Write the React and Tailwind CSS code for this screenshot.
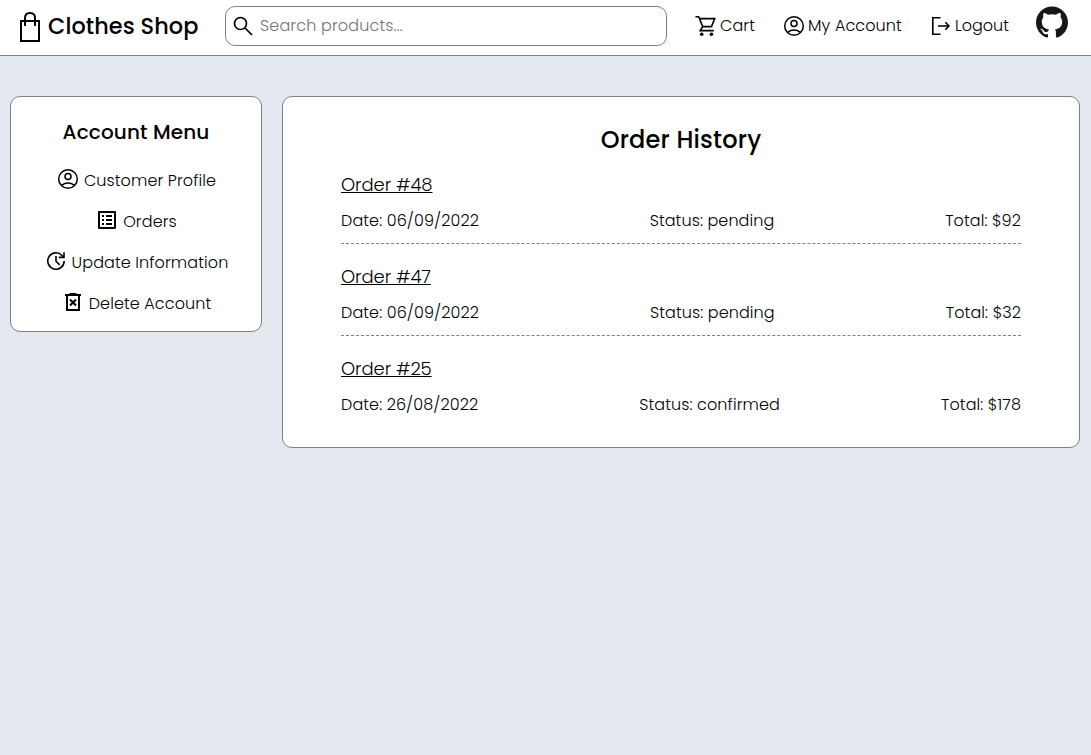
import React from "react";
import { MdOutlineListAlt } from "react-icons/md";
import { SiGithub } from "react-icons/si";

function Bag() {
  return (
    <svg className="mr-[6px] h-[32px] w-6" viewBox="0 0 24 32" fill="none" stroke="black" strokeWidth="2">
      <path d="M3 10h18v20H3zM7 15V7q0-5 5-5t5 5v8" />
    </svg>
  );
}

function Cart() {
  return (
    <svg className="mr-[4px] h-[22px] w-[21px]" viewBox="0 0 21 22" fill="none" stroke="black" strokeWidth="1.6">
      <path d="M0.5 1.8h3.2l4 9.8h8.8l3.2-8H4.5M7.7 11.6l-2.5 4h13.6" />
      <circle cx="6.7" cy="19.3" r="1.8" fill="black" stroke="none" />
      <circle cx="16.4" cy="19.3" r="1.8" fill="black" stroke="none" />
    </svg>
  );
}

function Profile({ className }) {
  return (
    <svg className={"size-[22px] " + className} viewBox="0 0 22 22" fill="none" stroke="black" strokeWidth="1.5">
      <circle cx="11" cy="11" r="9.3" />
      <circle cx="11" cy="8.5" r="3" />
      <path d="M4.5 17.3q6.5-4.6 13 0" />
    </svg>
  );
}

function Logout() {
  return (
    <svg className="mr-[3px] h-[20px] w-[20px]" viewBox="0 0 20 20" fill="none" stroke="black" strokeWidth="1.6">
      <path d="M9.5 1.8H1.8v16.4h7.7M7 10h11M14.3 6.2 18 10l-3.7 3.8" />
    </svg>
  );
}

function Update() {
  return (
    <svg className="mb-[3px] size-5" viewBox="0 0 20 20" fill="none" stroke="black" strokeWidth="1.6">
      <path d="M18.2 10A8.2 8.2 0 1 1 15.8 4.2L17.5 6" />
      <path d="M18 1.2v5.2h-5.2M10 5v5.2l3.7 3.7" />
    </svg>
  );
}

function Orders() {
  return <MdOutlineListAlt className="mb-[3px] size-6" />;
}

function Trash() {
  return (
    <svg className="mb-[3px] h-[20px] w-[18px]" viewBox="0 0 18 20" fill="none" stroke="black" strokeWidth="2">
      <path d="M1 3h16M5.5 2h7M3 3v15h12V3M6 7.5l6 6M12 7.5l-6 6" />
    </svg>
  );
}

const menu = [
  { label: "Customer Profile", icon: <Profile className="mb-[3px]" />, gap: "gap-[5px] pl-px" },
  { label: "Orders", icon: <Orders />, gap: "gap-1" },
  { label: "Update Information", icon: <Update />, gap: "gap-[6px] pl-[2px]" },
  { label: "Delete Account", icon: <Trash />, gap: "gap-[7px] pl-[3px]" },
];

const orders = [
  { id: "Order #48", date: "06/09/2022", status: "pending", total: "$92" },
  { id: "Order #47", date: "06/09/2022", status: "pending", total: "$32" },
  { id: "Order #25", date: "26/08/2022", status: "confirmed", total: "$178" },
];

export default function App() {
  return (
    <div className="min-h-screen bg-[#e4e8f1] font-['Poppins','Inter',sans-serif] font-light tracking-[0.1px] text-black">
      <header className="flex h-14 border-b border-[#808080] bg-white pl-[18px]">
        <div className="flex h-[54px] w-[207px] shrink-0 items-center">
          <Bag />
          <span className="pb-px text-[22.4px] font-medium tracking-[0.08px] whitespace-nowrap">Clothes Shop</span>
        </div>
        <div className="mt-[6px] flex h-10 w-[442px] shrink-0 items-center rounded-[10px] border border-[#808080] pl-[7px]">
          <svg className="size-[20px]" viewBox="0 0 20 20" fill="none" stroke="black" strokeWidth="1.7">
            <circle cx="7.5" cy="7.5" r="6" />
            <path d="m12 12 7 7" />
          </svg>
          <input className="ml-[7px] w-96 bg-transparent tracking-[0.14px] outline-none placeholder:text-[#757575]" placeholder="Search products..." />
        </div>
        <nav className="flex h-[52px] items-center pl-[28px] whitespace-nowrap">
          <Cart />
          <span className="w-[63px]">Cart</span>
          <Profile className="mr-[3px]" />
          <span className="w-[123px]">My Account</span>
          <Logout />
          <span className="w-[82px] pl-px tracking-normal">Logout</span>
          <SiGithub className="mb-2 size-8 text-[#181616]" />
        </nav>
      </header>
      <main className="flex items-start gap-5 px-[10px] pt-10">
        <aside className="flex h-[236px] w-[252px] flex-col items-center rounded-[10px] border border-[#808080] bg-white pt-5">
          <h2 className="mb-[13px] text-xl leading-[30px] font-medium tracking-[0.13px]">Account Menu</h2>
          {menu.map(({ label, icon, gap }) => (
            <a key={label} className={"flex h-[41px] items-center " + gap}>
              {icon}
              <span>{label}</span>
            </a>
          ))}
        </aside>
        <section className="h-[352px] w-[798px] rounded-[10px] border border-[#808080] bg-white px-[58px] pt-[25px]">
          <h1 className="mb-[3px] text-center text-2xl leading-9 font-medium tracking-[0.2px]">Order History</h1>
          {orders.map((o, i) => (
            <article key={o.id} className={"mb-[9px] h-[83px] pt-[9px] " + (i < 2 ? "border-b border-dashed border-[#808080]" : "")}>
              <a className="flex h-[30px] items-center text-lg tracking-[-0.1px] underline">{o.id}</a>
              <div className="mt-[5px] flex h-8 items-center justify-between">
                <p>Date: {o.date}</p>
                <p>Status: {o.status}</p>
                <p>Total: {o.total}</p>
              </div>
            </article>
          ))}
        </section>
      </main>
    </div>
  );
}
